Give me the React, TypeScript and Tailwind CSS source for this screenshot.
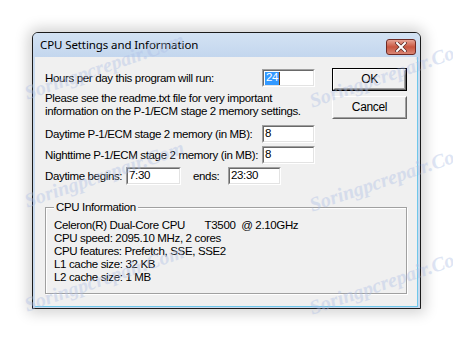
import React from "react";

const ui = { fontFamily: '"Liberation Sans", Arial, sans-serif' };

function Field({ value, w, selected }: { value: string; w: string; selected?: boolean }) {
  return (
    <div className={`${w} h-[18px] shrink-0 border border-t-[#a0a0a0] border-l-[#a0a0a0] border-b-white border-r-white`}>
      <div className="h-full border border-t-[#696969] border-l-[#696969] border-b-[#e3e3e3] border-r-[#e3e3e3] bg-white flex items-center pl-[1px] text-[11.5px] text-black leading-none">
        {selected ? (
          <>
            <span className="bg-[#3399ff] text-white px-[1px] h-[13px] flex items-center">{value}</span>
            <span className="w-[1px] h-[13px] bg-[#6b3a10]" />
          </>
        ) : (
          <span>{value}</span>
        )}
      </div>
    </div>
  );
}

function Btn({ label, def }: { label: string; def?: boolean }) {
  return (
    <div className={`w-[75px] h-[23px] ${def ? "border border-black" : ""}`}>
      <div className="h-full border border-t-white border-l-white border-b-[#696969] border-r-[#696969]">
        <div className="h-full border border-t-[#f0f0f0] border-l-[#f0f0f0] border-b-[#a0a0a0] border-r-[#a0a0a0] bg-[#f0f0f0] flex items-center justify-center text-[12px] text-black">
          {label}
        </div>
      </div>
    </div>
  );
}

function Mark({ x, y }: { x: number; y: number }) {
  return (
    <div
      className="absolute w-[185px] text-[20px] italic font-bold text-[#aebfe6] opacity-40 whitespace-nowrap pointer-events-none -rotate-[19deg]"
      style={{ left: x, top: y, fontFamily: '"Liberation Serif", serif' }}
    >
      Soringpcrepair.Com
    </div>
  );
}

export default function App() {
  return (
    <div className="relative w-[453px] h-[341px] bg-white overflow-hidden pl-[32px] pt-[32px]" style={ui}>
      <div className="w-[389px] h-[277px] rounded-t-[6px] border border-[#1b1b1b] bg-[#c9daee] flex flex-col shadow-[0_0_14px_4px_rgba(0,0,0,0.18)]">
        {/* Title bar */}
        <div className="h-[24px] flex items-center justify-between pl-[7px] pr-[4px] rounded-t-[5px] bg-gradient-to-b from-[#d3e2f3] to-[#c3d6ee]">
          <span className="text-[11.5px] tracking-[-0.1px] text-black" style={{ fontFamily: '"Noto Sans", "Open Sans", sans-serif' }}>
            CPU Settings and Information
          </span>
          <div className="w-[30px] h-[16px] mt-[4px] rounded-[3px] border border-[#6e2a24] bg-gradient-to-b from-[#e6a395] via-[#c8553f] to-[#d98573] flex items-center justify-center">
            <svg width="12" height="10" viewBox="0 0 12 10">
              <path d="M2 1 L10 9 M10 1 L2 9" stroke="#5a2a26" strokeWidth="3.4" strokeLinecap="square" />
              <path d="M2 1 L10 9 M10 1 L2 9" stroke="#ffffff" strokeWidth="2" strokeLinecap="square" />
            </svg>
          </div>
        </div>
        {/* client */}
        <div className="flex-1 mx-[2px] mb-[1px] border-b border-r border-[#6fc7ea] bg-[#f0f0f0] flex flex-col text-[11.5px] tracking-[-0.35px] text-black leading-[13px] whitespace-nowrap">
          <div className="flex pt-[11px] pl-[10px] pr-[10px]">
            <div className="flex-1 flex flex-col pt-[1px]">
              <div className="flex items-center h-[18px]">
                <span className="w-[217px]">Hours per day this program will run:</span>
                <Field value="24" w="w-[53px]" selected />
              </div>
              <div className="mt-[5px]">
                <div>Please see the readme.txt file for very important</div>
                <div>information on the P-1/ECM stage 2 memory settings.</div>
              </div>
              <div className="flex items-center h-[18px] mt-[7px]">
                <span className="w-[217px]">Daytime P-1/ECM stage 2 memory (in MB):</span>
                <Field value="8" w="w-[53px]" />
              </div>
              <div className="flex items-center h-[18px] mt-[3px]">
                <span className="w-[217px]">Nighttime P-1/ECM stage 2 memory (in MB):</span>
                <Field value="8" w="w-[53px]" />
              </div>
              <div className="flex items-center h-[18px] mt-[3px]">
                <span className="w-[81px]">Daytime begins:</span>
                <Field value="7:30" w="w-[55px]" />
                <span className="ml-[12px] w-[35px]">ends:</span>
                <Field value="23:30" w="w-[53px]" />
              </div>
            </div>
            <div className="flex flex-col gap-[5px]">
              <Btn label="OK" def />
              <Btn label="Cancel" />
            </div>
          </div>
          <div className="relative mx-[10px] mt-[22px] border border-[#a0a0a0] shadow-[inset_1px_1px_0_#ffffff,1px_1px_0_#ffffff] pt-[11px] pb-[9px] pl-[8px]">
            <span className="absolute -top-[7px] left-[8px] px-[2px] bg-[#f0f0f0]">CPU Information</span>
            <div className="whitespace-pre">Celeron(R) Dual-Core CPU       T3500  @ 2.10GHz</div>
            <div>CPU speed: 2095.10 MHz, 2 cores</div>
            <div>CPU features: Prefetch, SSE, SSE2</div>
            <div>L1 cache size: 32 KB</div>
            <div>L2 cache size: 1 MB</div>
          </div>
        </div>
      </div>
      <Mark x={20} y={48} />
      <Mark x={305} y={56} />
      <Mark x={20} y={156} />
      <Mark x={305} y={160} />
      <Mark x={20} y={260} />
      <Mark x={305} y={263} />
    </div>
  );
}
